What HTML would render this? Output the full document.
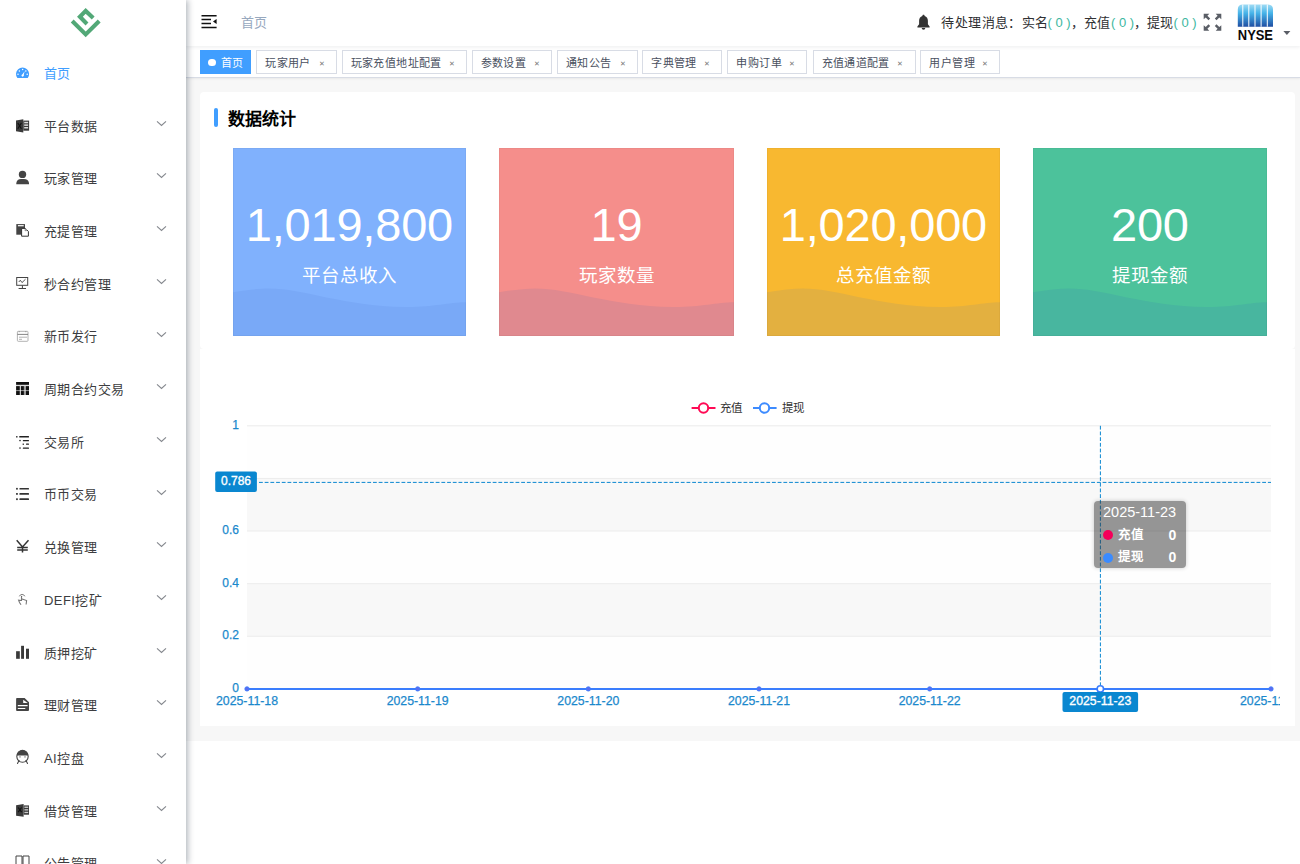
<!DOCTYPE html><html lang="zh-CN"><head><meta charset="utf-8"><style>
*{box-sizing:border-box;margin:0;padding:0}
html,body{width:1300px;height:864px;overflow:hidden;background:#fff;font-family:"Liberation Sans",sans-serif;position:relative}
#side{position:absolute;left:0;top:0;width:186px;height:864px;background:#fff;z-index:10;box-shadow:2px 0 6px rgba(0,21,41,.30);overflow:hidden}
.mi{position:absolute;left:0;width:186px;height:52.7px}
.mi svg.ic{position:absolute;left:10px;width:24px;height:24px}
.mi .tx{position:absolute;left:44px;font-size:13px;line-height:16px;color:#303133;white-space:nowrap;letter-spacing:0.45px}
.mi svg.ch{position:absolute;left:156px;width:11px;height:7px}
#hdr{position:absolute;left:186px;top:0;width:1114px;height:46px;background:#fff;box-shadow:0 1px 4px rgba(0,21,41,.08);z-index:3}
#tags{position:absolute;left:186px;top:46px;width:1114px;height:32px;background:#fff;border-bottom:1px solid #d8dce5;box-shadow:0 1px 2px 0 rgba(0,0,0,.06);z-index:2}
.tag{position:absolute;top:4px;height:24px;border:1px solid #d8dce5;background:#fff;color:#495060;font-size:11px;line-height:22px;white-space:nowrap}
.tag .t{position:absolute;left:8px;top:0.7px;letter-spacing:0.4px}
.tag .x{position:absolute;top:1.6px;font-size:7px;color:#777}
#main{position:absolute;left:186px;top:78px;width:1114px;height:663px;background:#f7f7f7}
#card1{position:absolute;left:200px;top:92px;width:1095px;height:257px;background:#fff;border-radius:4px}
#chartp{position:absolute;left:200px;top:349px;width:1095px;height:377px;background:#fff}
.sc{position:absolute;top:148px;height:188px;overflow:hidden;color:#fff;text-align:center}
.sc:after{content:'';position:absolute;left:0;top:0;right:0;bottom:0;box-shadow:inset 0 0 0 1px rgba(0,0,0,.035)}
.sc .num{position:absolute;left:0;right:0;top:50.5px;font-size:47px;line-height:52px;white-space:nowrap;letter-spacing:-0.2px;text-indent:-0.2px}
.sc .lbl{position:absolute;left:0;right:0;top:116px;font-size:18.5px;line-height:24px;white-space:nowrap}
.sc svg{position:absolute;left:0;top:0}
</style></head><body>
<div id="main"></div><div id="card1"></div><div id="chartp"></div>
<div style="position:absolute;left:214px;top:108px;width:4px;height:19px;border-radius:2px;background:#409EFF"></div><div style="position:absolute;left:227.5px;top:109px;font-size:17px;line-height:22px;font-weight:bold;color:#000;letter-spacing:0.2px">数据统计</div><div class="sc" style="left:233px;width:233px;background:#80b1fd"><svg width="233" height="188" viewBox="0 0 233 188"><path d="M0,144.2 C14.0,142 26.0,140.5 36.0,140.5 C70.0,140.5 110.0,158 172.0,159 C200.0,159.3 215.0,154.5 233,154.3 L233,188 L0,188 Z" fill="#79a9f7"/></svg><div class="num">1,019,800</div><div class="lbl">平台总收入</div></div><div class="sc" style="left:499px;width:235px;background:#f58e8b"><svg width="235" height="188" viewBox="0 0 235 188"><path d="M0,144.2 C14.1,142 26.2,140.5 36.3,140.5 C70.6,140.5 110.9,158 173.5,159 C201.7,159.3 216.8,154.5 235,154.3 L235,188 L0,188 Z" fill="#e0898f"/></svg><div class="num">19</div><div class="lbl">玩家数量</div></div><div class="sc" style="left:767px;width:233px;background:#f8b830"><svg width="233" height="188" viewBox="0 0 233 188"><path d="M0,144.2 C14.0,142 26.0,140.5 36.0,140.5 C70.0,140.5 110.0,158 172.0,159 C200.0,159.3 215.0,154.5 233,154.3 L233,188 L0,188 Z" fill="#e3b040"/></svg><div class="num">1,020,000</div><div class="lbl">总充值金额</div></div><div class="sc" style="left:1033px;width:234px;background:#4cc29b"><svg width="234" height="188" viewBox="0 0 234 188"><path d="M0,144.2 C14.1,142 26.1,140.5 36.2,140.5 C70.3,140.5 110.5,158 172.7,159 C200.9,159.3 215.9,154.5 234,154.3 L234,188 L0,188 Z" fill="#48b69f"/></svg><div class="num">200</div><div class="lbl">提现金额</div></div>
<svg style="position:absolute;left:186px;top:349px" width="1094" height="377" viewBox="186 349 1094 377" font-family="Liberation Sans"><rect x="247" y="425.80" width="1024" height="52.62" fill="#fefefe"/><rect x="247" y="478.42" width="1024" height="52.62" fill="#f8f8f8"/><rect x="247" y="531.04" width="1024" height="52.62" fill="#fefefe"/><rect x="247" y="583.66" width="1024" height="52.62" fill="#f8f8f8"/><rect x="247" y="636.28" width="1024" height="52.62" fill="#fefefe"/><rect x="247" y="688.40" width="1024" height="1" fill="#ececec"/><rect x="247" y="635.78" width="1024" height="1" fill="#ececec"/><rect x="247" y="583.16" width="1024" height="1" fill="#ececec"/><rect x="247" y="530.54" width="1024" height="1" fill="#ececec"/><rect x="247" y="477.92" width="1024" height="1" fill="#ececec"/><rect x="247" y="425.30" width="1024" height="1" fill="#ececec"/><text x="239" y="429.00" text-anchor="end" font-size="12" fill="#1a88cc" stroke="#1a88cc" stroke-width="0.25">1</text><text x="239" y="534.24" text-anchor="end" font-size="12" fill="#1a88cc" stroke="#1a88cc" stroke-width="0.25">0.6</text><text x="239" y="586.86" text-anchor="end" font-size="12" fill="#1a88cc" stroke="#1a88cc" stroke-width="0.25">0.4</text><text x="239" y="639.48" text-anchor="end" font-size="12" fill="#1a88cc" stroke="#1a88cc" stroke-width="0.25">0.2</text><text x="239" y="692.10" text-anchor="end" font-size="12" fill="#1a88cc" stroke="#1a88cc" stroke-width="0.25">0</text><text x="247.00" y="705.2" text-anchor="middle" font-size="12.3" fill="#1a88cc" stroke="#1a88cc" stroke-width="0.25">2025-11-18</text><text x="417.67" y="705.2" text-anchor="middle" font-size="12.3" fill="#1a88cc" stroke="#1a88cc" stroke-width="0.25">2025-11-19</text><text x="588.33" y="705.2" text-anchor="middle" font-size="12.3" fill="#1a88cc" stroke="#1a88cc" stroke-width="0.25">2025-11-20</text><text x="759.00" y="705.2" text-anchor="middle" font-size="12.3" fill="#1a88cc" stroke="#1a88cc" stroke-width="0.25">2025-11-21</text><text x="929.67" y="705.2" text-anchor="middle" font-size="12.3" fill="#1a88cc" stroke="#1a88cc" stroke-width="0.25">2025-11-22</text><text x="1271.00" y="705.2" text-anchor="middle" font-size="12.3" fill="#1a88cc" stroke="#1a88cc" stroke-width="0.25">2025-11-24</text><path d="M691.6,408 H715.5" stroke="#ff0a55" stroke-width="2"/><circle cx="703.5" cy="408" r="4.7" fill="#fff" stroke="#ff0a55" stroke-width="2"/><text x="720" y="411.8" font-size="11.5" fill="#333">充值</text><path d="M753,408 H776.6" stroke="#3d8bff" stroke-width="2"/><circle cx="764.5" cy="408" r="4.7" fill="#fff" stroke="#3d8bff" stroke-width="2"/><text x="781.5" y="411.8" font-size="11.5" fill="#333">提现</text><path d="M259,482.4 H1271" stroke="#0a87d0" stroke-width="1" stroke-dasharray="3.8,1.9"/><path d="M1100.4,425.8 V688" stroke="#0a87d0" stroke-width="1" stroke-dasharray="3.8,1.9"/><path d="M247,688.9 H1271" stroke="#ff0a55" stroke-width="2"/><path d="M247,688.9 H1271" stroke="#3a7dfd" stroke-width="2"/><circle cx="247.00" cy="688.9" r="2.2" fill="#5b6cf0" stroke="#3a7dfd" stroke-width="0.8"/><circle cx="417.67" cy="688.9" r="2.2" fill="#5b6cf0" stroke="#3a7dfd" stroke-width="0.8"/><circle cx="588.33" cy="688.9" r="2.2" fill="#5b6cf0" stroke="#3a7dfd" stroke-width="0.8"/><circle cx="759.00" cy="688.9" r="2.2" fill="#5b6cf0" stroke="#3a7dfd" stroke-width="0.8"/><circle cx="929.67" cy="688.9" r="2.2" fill="#5b6cf0" stroke="#3a7dfd" stroke-width="0.8"/><circle cx="1100.33" cy="688.9" r="3.2" fill="#fff" stroke="#3a7dfd" stroke-width="1.6"/><circle cx="1271.00" cy="688.9" r="2.2" fill="#5b6cf0" stroke="#3a7dfd" stroke-width="0.8"/><rect x="215.2" y="471.4" width="41.7" height="20.5" rx="2" fill="#0a87d0"/><text x="236" y="485.3" text-anchor="middle" font-size="12" fill="#fff" stroke="#fff" stroke-width="0.35">0.786</text><rect x="1062.5" y="692" width="75.6" height="20" rx="2" fill="#0a87d0"/><text x="1100.3" y="705.4" text-anchor="middle" font-size="12.3" fill="#fff" stroke="#fff" stroke-width="0.35">2025-11-23</text></svg><div style="position:absolute;left:1094px;top:501px;width:92px;height:67px;border-radius:4px;background:rgba(50,50,50,0.5);box-shadow:0 0 4px rgba(0,0,0,.2);color:#fff"><div style="position:absolute;left:9px;top:2.8px;font-size:14.5px;line-height:17px;white-space:nowrap">2025-11-23</div><span style="position:absolute;left:9px;top:29px;width:10px;height:10px;border-radius:50%;background:#f5005a"></span><div style="position:absolute;left:24px;top:25.5px;font-size:12.5px;line-height:17px;font-weight:600;white-space:nowrap">充值</div><div style="position:absolute;left:74.5px;top:25.5px;font-size:14px;line-height:17px;font-weight:bold">0</div><span style="position:absolute;left:9px;top:51.5px;width:10px;height:10px;border-radius:50%;background:#3a8bff"></span><div style="position:absolute;left:24px;top:48px;font-size:12.5px;line-height:17px;font-weight:600;white-space:nowrap">提现</div><div style="position:absolute;left:74.5px;top:48px;font-size:14px;line-height:17px;font-weight:bold">0</div></div>
<div id="hdr-wrap"><div id="hdr"><svg style="position:absolute;left:14px;top:13px" width="18" height="17" viewBox="0 0 18 17">
<path d="M1.5,2.7 H16.6 M1.5,14.6 H16.6 M1.5,6.6 H11 M1.5,10.5 H11" stroke="#111" stroke-width="1.5"/>
<path d="M16.6,6 L13,8.5 L16.6,11 Z" fill="#111"/></svg><div style="position:absolute;left:54.5px;top:14.7px;font-size:13px;line-height:16px;color:#97a8be;letter-spacing:0.4px">首页</div><svg style="position:absolute;left:730px;top:14px" width="15" height="16" viewBox="0 0 15 16">
<path d="M7.5,0.8 C8.3,0.8 8.6,1.3 8.6,1.9 C10.8,2.5 11.9,4.4 11.9,6.8 L11.9,10.3 L13.6,12.6 L13.6,13.4 L1.4,13.4 L1.4,12.6 L3.1,10.3 L3.1,6.8 C3.1,4.4 4.2,2.5 6.4,1.9 C6.4,1.3 6.7,0.8 7.5,0.8 Z" fill="#333"/>
<path d="M5.7,14.1 A1.8,1.6 0 0 0 9.3,14.1 Z" fill="#333"/></svg><span style="position:absolute;left:755.2px;top:15px;font-size:13px;line-height:16px;color:#303133;white-space:nowrap;letter-spacing:0.45px">待处理消息：实名</span><span style="position:absolute;left:861.5px;top:15px;font-size:13px;line-height:16px;color:#3cb7a0;white-space:nowrap;letter-spacing:0">(&nbsp;0&nbsp;)</span><span style="position:absolute;left:884.5px;top:15px;font-size:13px;line-height:16px;color:#303133;white-space:nowrap;letter-spacing:0.45px">，充值</span><span style="position:absolute;left:925px;top:15px;font-size:13px;line-height:16px;color:#3cb7a0;white-space:nowrap;letter-spacing:0">(&nbsp;0&nbsp;)</span><span style="position:absolute;left:947.5999999999999px;top:15px;font-size:13px;line-height:16px;color:#303133;white-space:nowrap;letter-spacing:0.45px">，提现</span><span style="position:absolute;left:987.5px;top:15px;font-size:13px;line-height:16px;color:#3cb7a0;white-space:nowrap;letter-spacing:0">(&nbsp;0&nbsp;)</span><svg style="position:absolute;left:1017px;top:13px" width="19" height="19" viewBox="0 0 19 19">
<g fill="#5a5e66"><path d="M0.7,0.8 H6.3 L4.4,2.7 L7.2,5.5 L5.5,7.2 L2.7,4.4 L0.7,6.3 Z"/>
<path d="M18.3,0.8 H12.7 L14.6,2.7 L11.8,5.5 L13.5,7.2 L16.3,4.4 L18.3,6.3 Z"/>
<path d="M0.7,17.7 H6.3 L4.4,15.8 L7.2,13 L5.5,11.3 L2.7,14.1 L0.7,12.2 Z"/>
<path d="M18.3,17.7 H12.7 L14.6,15.8 L11.8,13 L13.5,11.3 L16.3,14.1 L18.3,12.2 Z"/></g></svg><svg style="position:absolute;left:1051px;top:4px" width="37" height="37" viewBox="0 0 37 37">
<defs><linearGradient id="ng" x1="0" y1="0" x2="0" y2="1"><stop offset="0" stop-color="#a5def5"/><stop offset="0.4" stop-color="#45b3e8"/><stop offset="1" stop-color="#1d4aa0"/></linearGradient>
<clipPath id="nc"><path d="M0.8,22.8 V5.5 Q0.8,0.4 5.8,0.4 H31 Q36,0.4 36,5.5 V22.8 Z"/></clipPath></defs>
<g clip-path="url(#nc)"><rect x="0" y="0" width="37" height="23.2" fill="url(#ng)"/>
<g fill="#fff"><rect x="5.3" y="0" width="1" height="24"/><rect x="11.3" y="0" width="1" height="24"/><rect x="17.5" y="0" width="1" height="24"/><rect x="23.6" y="0" width="1" height="24"/><rect x="29.8" y="0" width="1" height="24"/></g></g>
<text x="0.8" y="35.8" font-family="Liberation Sans" font-weight="bold" font-size="14.5" fill="#0a0a0a" textLength="35.2" lengthAdjust="spacingAndGlyphs">NYSE</text></svg><svg style="position:absolute;left:1097px;top:30px" width="8" height="6" viewBox="0 0 8 6"><path d="M0.4,0.9 H7.4 L3.9,5.1 Z" fill="#5a5e66"/></svg></div></div>
<div id="tags"><div class="tag" style="left:14px;width:51px;background:#409EFF;border-color:#409EFF;color:#fff"><span style="position:absolute;left:7px;top:7.8px;width:7.6px;height:7.6px;border-radius:50%;background:#fff"></span><span class="t" style="left:20px">首页</span></div><div class="tag" style="left:70.2px;width:80.7px"><span class="t">玩家用户</span><span class="x" style="left:61.5px">✕</span></div><div class="tag" style="left:155.6px;width:125.2px"><span class="t">玩家充值地址配置</span><span class="x" style="left:106.0px">✕</span></div><div class="tag" style="left:285.6px;width:80.4px"><span class="t">参数设置</span><span class="x" style="left:61.2px">✕</span></div><div class="tag" style="left:371.0px;width:80.7px"><span class="t">通知公告</span><span class="x" style="left:61.5px">✕</span></div><div class="tag" style="left:456.3px;width:80.2px"><span class="t">字典管理</span><span class="x" style="left:61.0px">✕</span></div><div class="tag" style="left:541.4px;width:79.6px"><span class="t">申购订单</span><span class="x" style="left:60.4px">✕</span></div><div class="tag" style="left:626.5px;width:103.0px"><span class="t">充值通道配置</span><span class="x" style="left:83.8px">✕</span></div><div class="tag" style="left:734.4px;width:79.8px"><span class="t">用户管理</span><span class="x" style="left:60.6px">✕</span></div></div>
<div id="side"><svg style="position:absolute;left:0;top:0" width="186" height="47" viewBox="0 0 186 47">
<polyline points="72.2,21 85.7,34.4 99.2,21" fill="none" stroke="#52a877" stroke-width="4.1" stroke-linejoin="miter"/>
<polyline points="87.0,24.0 79.9,16.8 85.7,10.9 93.2,18.0" fill="none" stroke="#52a877" stroke-width="4.1" stroke-linejoin="miter"/>
</svg><div class="mi" style="top:47.05px"><svg class="ic" style="top:12.75px" viewBox="0 0 24 24"><path d="M7.4,18.1 A6.55,6.55 0 1 1 17.7,18.1 Z" fill="#409EFF"/>
<g fill="#fff"><circle cx="9.4" cy="11" r="0.75"/><circle cx="12.6" cy="9.5" r="0.75"/><circle cx="15.8" cy="11" r="0.75"/><circle cx="8" cy="14.2" r="0.75"/><circle cx="17.2" cy="14.2" r="0.75"/>
<path d="M11.7,15.4 L14.6,11.2 L13.5,15.9 Z"/><circle cx="12.6" cy="15.6" r="1.1"/></g></svg><div class="tx" style="top:18.85px;color:#409EFF">首页</div></div><div class="mi" style="top:99.75px"><svg class="ic" style="top:12.75px" viewBox="0 0 24 24"><path d="M6,7.4 L13.3,6.2 L13.3,19.6 L6,18.3 Z" fill="#3a3a3a"/>
<path d="M7.8,10 L11.4,15.8 M11.4,10 L7.8,15.8" stroke="#111" stroke-width="1.2"/>
<rect x="13.3" y="7.6" width="5.8" height="10.1" fill="#3a3a3a"/>
<rect x="14.2" y="8.8" width="3.9" height="1.5" fill="#ddd"/><rect x="14.2" y="11.4" width="3.9" height="1.5" fill="#ddd"/><rect x="14.2" y="14" width="3.9" height="1.5" fill="#ddd"/></svg><div class="tx" style="top:18.85px;color:#3c3d40">平台数据</div><svg class="ch" style="top:20.05px" viewBox="0 0 11 7"><path d="M1,1.3 L5.5,5.5 L10,1.3" fill="none" stroke="#85888e" stroke-width="1.1"/></svg></div><div class="mi" style="top:152.45px"><svg class="ic" style="top:12.75px" viewBox="0 0 24 24"><circle cx="12.5" cy="9.4" r="3.7" fill="#444"/>
<path d="M6.3,19.2 L6.3,18 Q7,13.9 11,13.9 L14,13.9 Q18.4,13.9 19,18 L19,19.2 Z" fill="#444"/></svg><div class="tx" style="top:18.85px;color:#3c3d40">玩家管理</div><svg class="ch" style="top:20.05px" viewBox="0 0 11 7"><path d="M1,1.3 L5.5,5.5 L10,1.3" fill="none" stroke="#85888e" stroke-width="1.1"/></svg></div><div class="mi" style="top:205.15px"><svg class="ic" style="top:12.75px" viewBox="0 0 24 24"><rect x="6.3" y="6.1" width="8.7" height="10.6" fill="#444"/>
<rect x="7.9" y="7.1" width="5.8" height="1.2" fill="#fff"/>
<path d="M11.6,10.4 L15.2,10.4 L18.4,13.4 L18.4,18.2 L11.6,18.2 Z" fill="#fff" stroke="#333" stroke-width="1"/>
<circle cx="15.8" cy="12" r="1.3" fill="#999"/></svg><div class="tx" style="top:18.85px;color:#3c3d40">充提管理</div><svg class="ch" style="top:20.05px" viewBox="0 0 11 7"><path d="M1,1.3 L5.5,5.5 L10,1.3" fill="none" stroke="#85888e" stroke-width="1.1"/></svg></div><div class="mi" style="top:257.85px"><svg class="ic" style="top:12.75px" viewBox="0 0 24 24"><rect x="6.7" y="6.5" width="11" height="7.8" fill="none" stroke="#444" stroke-width="1"/>
<path d="M12.4,14.3 V17.4 M8.6,17.5 H16" stroke="#444" stroke-width="1"/>
<path d="M8.8,11 L10.3,9.2 L12,11.6 L15.5,8.2" fill="none" stroke="#555" stroke-width="1"/></svg><div class="tx" style="top:18.85px;color:#3c3d40">秒合约管理</div><svg class="ch" style="top:20.05px" viewBox="0 0 11 7"><path d="M1,1.3 L5.5,5.5 L10,1.3" fill="none" stroke="#85888e" stroke-width="1.1"/></svg></div><div class="mi" style="top:310.55px"><svg class="ic" style="top:12.75px" viewBox="0 0 24 24"><rect x="7.4" y="8.3" width="10.6" height="10" rx="0.8" fill="none" stroke="#aaa" stroke-width="0.9"/>
<path d="M7.4,11.4 H18" stroke="#777" stroke-width="0.9"/>
<path d="M9.2,8 V9.2 M15.8,8 V9.2" stroke="#999" stroke-width="1"/>
<path d="M9,14.2 H17 M9,16.3 H12" stroke="#aaa" stroke-width="0.9"/></svg><div class="tx" style="top:18.85px;color:#3c3d40">新币发行</div><svg class="ch" style="top:20.05px" viewBox="0 0 11 7"><path d="M1,1.3 L5.5,5.5 L10,1.3" fill="none" stroke="#85888e" stroke-width="1.1"/></svg></div><div class="mi" style="top:363.25px"><svg class="ic" style="top:12.75px" viewBox="0 0 24 24"><rect x="6.1" y="6" width="12.9" height="2.9" fill="#111"/>
<rect x="9.8" y="10.1" width="1.2" height="8.9" fill="#c8c8c8"/><rect x="13.9" y="10.1" width="2.1" height="8.9" fill="#9a9a9a"/><rect x="6.1" y="8.9" width="12.9" height="1.2" fill="#ddd"/>
<rect x="6.1" y="10.1" width="3.7" height="8.9" fill="#111"/><rect x="11" y="10.1" width="2.9" height="8.9" fill="#111"/><rect x="16" y="10.1" width="3" height="8.9" fill="#111"/>
<path d="M6.1,14.6 H19" stroke="#fff" stroke-width="0.8" opacity="0.7"/></svg><div class="tx" style="top:18.85px;color:#3c3d40">周期合约交易</div><svg class="ch" style="top:20.05px" viewBox="0 0 11 7"><path d="M1,1.3 L5.5,5.5 L10,1.3" fill="none" stroke="#85888e" stroke-width="1.1"/></svg></div><div class="mi" style="top:415.95px"><svg class="ic" style="top:12.75px" viewBox="0 0 24 24"><g fill="#222"><rect x="6.1" y="7.1" width="1.4" height="1.4"/><rect x="9.2" y="7.1" width="9.8" height="1.4" rx="0.5"/>
<rect x="9.3" y="10.9" width="1.4" height="1.3"/><rect x="12.8" y="10.9" width="6.2" height="1.3" rx="0.5"/>
<rect x="12.6" y="14.6" width="1.4" height="1.2"/><rect x="16" y="14.6" width="3" height="1.2" rx="0.5"/>
<rect x="9.3" y="18.4" width="1.4" height="1.3"/><rect x="12.8" y="18.4" width="6.2" height="1.3" rx="0.5"/></g></svg><div class="tx" style="top:18.85px;color:#3c3d40">交易所</div><svg class="ch" style="top:20.05px" viewBox="0 0 11 7"><path d="M1,1.3 L5.5,5.5 L10,1.3" fill="none" stroke="#85888e" stroke-width="1.1"/></svg></div><div class="mi" style="top:468.65px"><svg class="ic" style="top:12.75px" viewBox="0 0 24 24"><g fill="#333"><rect x="6.1" y="6.9" width="1.7" height="1.7"/><rect x="9.4" y="6.9" width="9.6" height="1.7" rx="0.6"/>
<rect x="6.1" y="12" width="1.7" height="1.8"/><rect x="9.4" y="12" width="9.6" height="1.8" rx="0.6"/>
<rect x="6.1" y="17.3" width="1.7" height="1.8"/><rect x="9.4" y="17.3" width="9.6" height="1.8" rx="0.6"/></g></svg><div class="tx" style="top:18.85px;color:#3c3d40">币币交易</div><svg class="ch" style="top:20.05px" viewBox="0 0 11 7"><path d="M1,1.3 L5.5,5.5 L10,1.3" fill="none" stroke="#85888e" stroke-width="1.1"/></svg></div><div class="mi" style="top:521.35px"><svg class="ic" style="top:12.75px" viewBox="0 0 24 24"><path d="M6.7,6.3 L12.5,12.9 L18.5,6.3 M12.5,12.9 V18.6 M7.2,13.4 H17.8 M7.2,15.9 H17.8" fill="none" stroke="#333" stroke-width="1.5"/></svg><div class="tx" style="top:18.85px;color:#3c3d40">兑换管理</div><svg class="ch" style="top:20.05px" viewBox="0 0 11 7"><path d="M1,1.3 L5.5,5.5 L10,1.3" fill="none" stroke="#85888e" stroke-width="1.1"/></svg></div><div class="mi" style="top:574.05px"><svg class="ic" style="top:12.75px" viewBox="0 0 24 24"><path d="M9.4,9.3 A2.9,2.9 0 0 1 14.8,9.3" fill="none" stroke="#777" stroke-width="1"/>
<circle cx="11.6" cy="9.6" r="0.7" fill="#555"/>
<path d="M11.5,10 V13.5 L8.6,13.2 L9.5,15.5 L11,17.8 M11.5,11.8 L16.6,13.6 L16.1,17.5" fill="none" stroke="#777" stroke-width="1.1"/></svg><div class="tx" style="top:18.85px;color:#3c3d40">DEFI挖矿</div><svg class="ch" style="top:20.05px" viewBox="0 0 11 7"><path d="M1,1.3 L5.5,5.5 L10,1.3" fill="none" stroke="#85888e" stroke-width="1.1"/></svg></div><div class="mi" style="top:626.75px"><svg class="ic" style="top:12.75px" viewBox="0 0 24 24"><g fill="#3a3a3a"><rect x="6.1" y="11.2" width="3.7" height="7.6"/><rect x="11.1" y="5.8" width="2.9" height="13"/><rect x="16" y="8.7" width="3" height="10.1"/></g></svg><div class="tx" style="top:18.85px;color:#3c3d40">质押挖矿</div><svg class="ch" style="top:20.05px" viewBox="0 0 11 7"><path d="M1,1.3 L5.5,5.5 L10,1.3" fill="none" stroke="#85888e" stroke-width="1.1"/></svg></div><div class="mi" style="top:679.45px"><svg class="ic" style="top:12.75px" viewBox="0 0 24 24"><path d="M7,6 L14.6,6 L19,10.2 L19,18 Q19,19 18,19 L7,19 Q6.1,19 6.1,18 L6.1,7 Q6.1,6 7,6 Z" fill="#444"/>
<path d="M13.2,7.8 L13.2,10.9 L17.7,10.9 Z" fill="#fff"/>
<rect x="7.8" y="13" width="9.8" height="1.2" fill="#fff"/><rect x="7.8" y="16" width="7.5" height="1" fill="#fff"/></svg><div class="tx" style="top:18.85px;color:#3c3d40">理财管理</div><svg class="ch" style="top:20.05px" viewBox="0 0 11 7"><path d="M1,1.3 L5.5,5.5 L10,1.3" fill="none" stroke="#85888e" stroke-width="1.1"/></svg></div><div class="mi" style="top:732.15px"><svg class="ic" style="top:12.75px" viewBox="0 0 24 24"><circle cx="12.5" cy="11.5" r="5.7" fill="none" stroke="#444" stroke-width="1.1"/>
<path d="M6.8,10.5 A5.7,5.7 0 0 1 18.2,10.5 Z" fill="#444"/>
<circle cx="10" cy="11.9" r="0.8" fill="#999"/><circle cx="15" cy="11.9" r="0.8" fill="#999"/>
<path d="M9,15.5 L7.5,18.4 M16,15.5 L17.5,18.4" stroke="#444" stroke-width="1.1" stroke-linecap="round"/></svg><div class="tx" style="top:18.85px;color:#3c3d40">AI控盘</div><svg class="ch" style="top:20.05px" viewBox="0 0 11 7"><path d="M1,1.3 L5.5,5.5 L10,1.3" fill="none" stroke="#85888e" stroke-width="1.1"/></svg></div><div class="mi" style="top:784.85px"><svg class="ic" style="top:12.75px" viewBox="0 0 24 24"><path d="M6.1,7.2 L13.6,6.1 L13.6,18.8 L6.1,17.7 Z" fill="#3a3a3a"/>
<path d="M8.2,9.5 L11.6,14.2 M11.6,9.5 L8.2,14.2" stroke="#111" stroke-width="1.2"/>
<rect x="13.6" y="7.4" width="5.4" height="9.3" fill="#3a3a3a"/>
<rect x="14.4" y="8.6" width="3.8" height="1.3" fill="#ccc"/><rect x="14.4" y="11.2" width="3.8" height="1.3" fill="#ccc"/><rect x="14.4" y="13.8" width="3.8" height="1.3" fill="#ccc"/></svg><div class="tx" style="top:18.85px;color:#3c3d40">借贷管理</div><svg class="ch" style="top:20.05px" viewBox="0 0 11 7"><path d="M1,1.3 L5.5,5.5 L10,1.3" fill="none" stroke="#85888e" stroke-width="1.1"/></svg></div><div class="mi" style="top:837.55px"><svg class="ic" style="top:12.75px" viewBox="0 0 24 24"><path d="M6,6 H12 V19 H6 Z M13,6 H19 V19 H13 Z" fill="none" stroke="#444" stroke-width="1"/></svg><div class="tx" style="top:18.85px;color:#3c3d40">公告管理</div><svg class="ch" style="top:20.05px" viewBox="0 0 11 7"><path d="M1,1.3 L5.5,5.5 L10,1.3" fill="none" stroke="#85888e" stroke-width="1.1"/></svg></div></div>
</body></html>
